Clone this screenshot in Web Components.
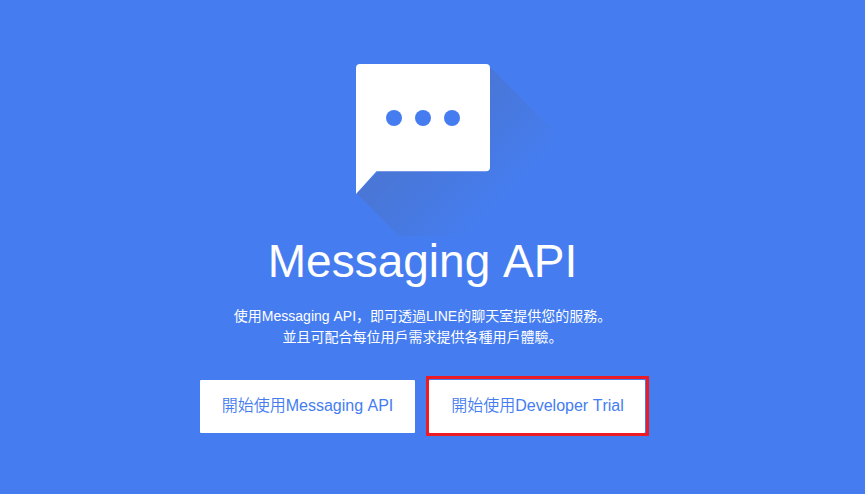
<!DOCTYPE html>
<html lang="zh-Hans"><head><meta charset="utf-8"><title>Messaging API</title>
<style>html,body{margin:0;height:100%;overflow:hidden;background:#457df1}</style></head>
<body>
<api-hero>
  <message-icon slot="icon"></message-icon>
  <span slot="title">Messaging API</span>
  <span slot="line1">使用Messaging API，即可透過LINE的聊天室提供您的服務。</span>
  <span slot="line2">並且可配合每位用戶需求提供各種用戶體驗。</span>
  <hero-button slot="actions">開始使用Messaging API</hero-button>
  <hero-button slot="actions" marked>開始使用Developer Trial</hero-button>
</api-hero>
<script>
customElements.define('message-icon', class extends HTMLElement {
  constructor(){ super(); this.attachShadow({mode:'open'}).innerHTML = `
<style>:host{display:block;width:200px;height:176px}svg{display:block}</style>
<svg width="200" height="176" viewBox="356 62 200 176" aria-hidden="true">
<defs><linearGradient id="g" gradientUnits="userSpaceOnUse" x1="420" y1="130" x2="500" y2="210"><stop offset="0" stop-color="#4a76d5"/><stop offset=".5" stop-color="#4779e2"/><stop offset="1" stop-color="#457df1"/></linearGradient></defs>
<path fill="url(#g)" d="M488 65L553 130V236H399L356 193Z"/>
<path fill="#fff" d="M360 64H486a4 4 0 0 1 4 4V167.300a4 4 0 0 1-4 4H376.500L356 194V68a4 4 0 0 1 4-4Z"/>
<g fill="#457df1"><circle cx="394" cy="118" r="8"/><circle cx="423" cy="118" r="8"/><circle cx="452" cy="118" r="8"/></g></svg>`; }
});
customElements.define('hero-button', class extends HTMLElement {
  constructor(){ super(); this.attachShadow({mode:'open'}).innerHTML = `
<style>:host{display:block;box-sizing:border-box;width:215px;height:53px;margin-top:4px}
:host([marked]){width:223px;height:60px;margin:0;border:3px solid #ed1c24;padding:1px 1px 0 0}
button{all:unset;box-sizing:border-box;display:block;width:100%;height:53px;padding-bottom:1px;background:#fff;color:#457df1;text-align:center;font:350 16px/48px "Liberation Sans","Noto Sans CJK SC",sans-serif;font-kerning:none;white-space:nowrap;border-radius:1px}
:host([marked]) button{padding-left:1px}</style>
<button><slot></slot></button>`; }
});
customElements.define('api-hero', class extends HTMLElement {
  constructor(){ super(); this.attachShadow({mode:'open'}).innerHTML = `
<style>:host{display:block;box-sizing:border-box;width:845px;height:494px;padding-top:62px;color:#fff;font-family:"Liberation Sans","Noto Sans CJK SC",sans-serif;text-align:center;font-kerning:none}
.icon{padding-left:356px;height:176px}
h1{margin:0;font-size:46px;font-weight:400;line-height:46px}
p{margin:22px 0 0;font-size:14px;line-height:21px;white-space:nowrap}
p ::slotted(span){display:block}
.actions{display:flex;gap:11px;padding-left:200px;margin-top:28px}</style>
<div class="icon"><slot name="icon"></slot></div>
<h1><slot name="title"></slot></h1>
<p><slot name="line1"></slot><slot name="line2"></slot></p>
<div class="actions"><slot name="actions"></slot></div>`; }
});
</script></body></html>
